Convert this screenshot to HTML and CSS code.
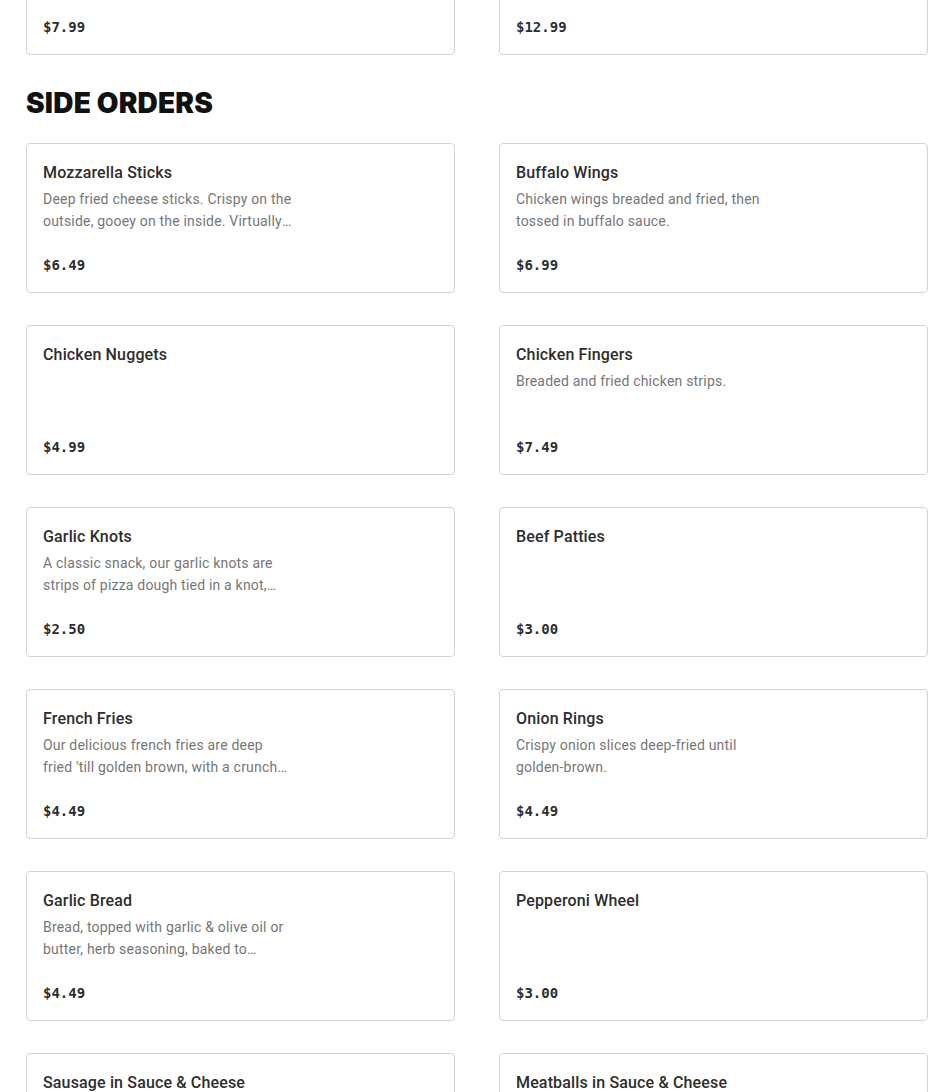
FILE: index.html
```html
<!DOCTYPE html>
<html>
<head>
<meta charset="utf-8">
<link rel="stylesheet" href="styles.css">
</head>
<body>
<main class="menu">
  <section class="section section-prev">
    <div class="grid">
      <div class="card"><h3 class="title">&nbsp;</h3><p class="desc"></p><div class="price">$7.99</div></div>
      <div class="card"><h3 class="title">&nbsp;</h3><p class="desc"></p><div class="price">$12.99</div></div>
    </div>
  </section>
  <section class="section">
    <h2 class="heading">SIDE ORDERS</h2>
    <div class="grid">
      <div class="card"><h3 class="title">Mozzarella Sticks</h3><p class="desc">Deep fried cheese sticks. Crispy on the outside, gooey on the inside. Virtually irresistible.</p><div class="price">$6.49</div></div>
      <div class="card"><h3 class="title">Buffalo Wings</h3><p class="desc">Chicken wings breaded and fried, then tossed in buffalo sauce.</p><div class="price">$6.99</div></div>
      <div class="card"><h3 class="title">Chicken Nuggets</h3><p class="desc"></p><div class="price">$4.99</div></div>
      <div class="card"><h3 class="title">Chicken Fingers</h3><p class="desc">Breaded and fried chicken strips.</p><div class="price">$7.49</div></div>
      <div class="card"><h3 class="title">Garlic Knots</h3><p class="desc">A classic snack, our garlic knots are strips of pizza dough tied in a knot, baked and topped with garlic.</p><div class="price">$2.50</div></div>
      <div class="card"><h3 class="title">Beef Patties</h3><p class="desc"></p><div class="price">$3.00</div></div>
      <div class="card"><h3 class="title">French Fries</h3><p class="desc">Our delicious french fries are deep fried 'till golden brown, with a crunch outside and fluffy inside.</p><div class="price">$4.49</div></div>
      <div class="card"><h3 class="title">Onion Rings</h3><p class="desc">Crispy onion slices deep-fried until golden-brown.</p><div class="price">$4.49</div></div>
      <div class="card"><h3 class="title">Garlic Bread</h3><p class="desc">Bread, topped with garlic &amp; olive oil or butter, herb seasoning, baked to perfection.</p><div class="price">$4.49</div></div>
      <div class="card"><h3 class="title">Pepperoni Wheel</h3><p class="desc"></p><div class="price">$3.00</div></div>
      <div class="card"><h3 class="title">Sausage in Sauce &amp; Cheese</h3><p class="desc"></p><div class="price">$5.99</div></div>
      <div class="card"><h3 class="title">Meatballs in Sauce &amp; Cheese</h3><p class="desc"></p><div class="price">$5.99</div></div>
    </div>
  </section>
</main>
</body>
</html>
```
FILE: styles.css
```css
html, body {
  margin: 0;
  padding: 0;
  background: #ffffff;
}
body {
  font-family: "Roboto", "Liberation Sans", sans-serif;
  color: #2d2d2d;
}
.menu {
  width: 902px;
  padding-left: 26px;
  margin-top: -95px;
}
.grid {
  display: grid;
  grid-template-columns: 1fr 1fr;
  column-gap: 44px;
  row-gap: 32px;
}
.section-prev {
  margin-bottom: 30px;
}
.heading {
  margin: 0 0 22px 0;
  font-family: "Inter", "Liberation Sans", sans-serif;
  font-weight: 900;
  font-size: 28px;
  line-height: 36px;
  color: #111111;
  letter-spacing: 0.2px;
}
.card {
  box-sizing: border-box;
  height: 150px;
  border: 1px solid #d3d3d3;
  border-radius: 4px;
  padding: 17px 16px 17px 16px;
  display: flex;
  flex-direction: column;
}
.title {
  margin: 0;
  font-size: 16px;
  line-height: 24px;
  font-weight: 500;
  letter-spacing: 0.15px;
  color: #2d2d2d;
}
.desc {
  margin: 3px 0 0 0;
  max-width: 252px;
  font-size: 14px;
  line-height: 22px;
  letter-spacing: 0.2px;
  color: #767676;
  display: -webkit-box;
  -webkit-line-clamp: 2;
  -webkit-box-orient: vertical;
  overflow: hidden;
}
.price {
  margin-top: auto;
  font-family: "DejaVu Sans Mono", "Liberation Mono", monospace;
  font-weight: 700;
  font-size: 14px;
  line-height: 20px;
  color: #2d2d2d;
}
```
